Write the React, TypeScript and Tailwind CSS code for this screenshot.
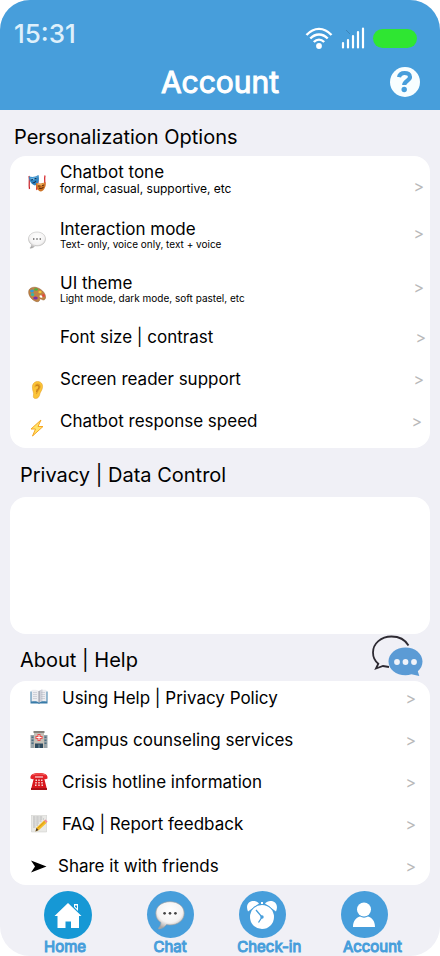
import type { ReactNode } from "react";

function SpeechBalloon({ size }: { size: number }) {
  return (
    <svg width={size} height={size} viewBox="0 0 36 36" aria-hidden="true">
      <defs>
        <radialGradient id="balloon" cx="50%" cy="32%" r="68%">
          <stop offset="0" stopColor="#ffffff" />
          <stop offset="0.65" stopColor="#f4f3f3" />
          <stop offset="1" stopColor="#a9a7a6" />
        </radialGradient>
      </defs>
      <path
        d="M18 2C8 2 1 8 1 16c0 5 2.400 8.600 6.200 11-.2 3-1.200 5-2.900 6.700-.5.700 0 1.200.8 1 4.200-.7 7-2.700 8.700-5.200 1.400.3 2.800.4 4.200.4 10 0 17-6 17-14S28 2 18 2z"
        fill="url(#balloon)"
        stroke="#a5a3a2"
        strokeWidth="0.8"
      />
      <circle cx="11.500" cy="16" r="1.600" fill="#444" />
      <circle cx="18" cy="16" r="1.600" fill="#444" />
      <circle cx="24.500" cy="16" r="1.600" fill="#444" />
    </svg>
  );
}

function Masks() {
  return (
    <svg width="18" height="18" viewBox="0 0 36 36" aria-hidden="true">
      <path d="M2 4c2 8-1 18 1 26M18 5c3 5 1 10 2 14" stroke="#c9242b" strokeWidth="2.500" fill="none" />
      <path d="M34 3c-2 8 1 14-1 22M17 20c2 4-1 8 1 12" stroke="#d6282c" strokeWidth="2.500" fill="none" />
      <path d="M2 5c7 2 13 1 19-3 2 9 1 18-7 21C7 21 2 14 2 5z" fill="#2f86c4" />
      <path d="M4 7c6 1 11 0 15-3 0 5-4 8-13 8z" fill="#6bb6e4" />
      <path d="M6 12l4-1M13 10l4-2M9 18c3 0 5-1 7-4" stroke="#123659" strokeWidth="2.200" fill="none" />
      <path d="M16 18c7 2 13 1 19-2 1 9-2 17-9 19-7-1-10-8-10-17z" fill="#cf7426" />
      <path d="M18 19c6 2 11 1 15-1 0 4-5 6-13 5z" fill="#f2ae56" />
      <path d="M20 24h5M28 23l4-1M22 28c4 2 7 1 9-2" stroke="#5e2a0d" strokeWidth="2.200" fill="none" />
    </svg>
  );
}

function Palette() {
  return (
    <svg width="18" height="18" viewBox="0 0 36 36" aria-hidden="true">
      <path
        d="M2 10C6 3 16 3 24 8c8 5 12 12 11 18-1 4-4 5-7 3-2-2-5-1-5 1 0 3-3 4-7 3C6 29-1 19 2 10z"
        fill="#c08345"
        stroke="#8d5a2b"
        strokeWidth="1"
      />
      <ellipse cx="26" cy="23" rx="3.200" ry="2.200" fill="#fff" transform="rotate(35 26 23)" />
      <ellipse cx="8" cy="12" rx="3.800" ry="3.200" fill="#2f9fd8" />
      <ellipse cx="16" cy="9" rx="3.800" ry="2.600" fill="#4fb043" />
      <ellipse cx="24" cy="14" rx="3.200" ry="2.500" fill="#f2cc35" />
      <ellipse cx="31" cy="21" rx="2.500" ry="3" fill="#e8473e" />
      <ellipse cx="9" cy="19" rx="3.500" ry="3" fill="#33b7a8" />
      <ellipse cx="15" cy="26" rx="4.500" ry="3.200" fill="#7a2ea8" />
    </svg>
  );
}

function Ear() {
  return (
    <svg width="18" height="18" viewBox="0 0 36 36" aria-hidden="true">
      <path
        d="M9 14C8 6 13 1 19 1c7 0 11 5 10 12-1 6-4 8-5 12-1 6-4 10-9 10-4 0-5-3-4-7 1-5-2-8-2-14z"
        fill="#fbc438"
        stroke="#e0991f"
        strokeWidth="1"
      />
      <path
        d="M13 13c0-5 3-8 6-8 5 0 7 4 6 8-1 4-4 6-5 9-1 3-3 5-4 4-1-2 2-4 0-7-1-2 1-3 3-4 2-2 1-5-1-5-3 0-3 3-5 3z"
        fill="#e39f2a"
      />
      <path d="M16 10c3-3 7-1 6 3s-4 5-5 9" stroke="#b76e12" strokeWidth="1.500" fill="none" />
    </svg>
  );
}

function Bolt() {
  return (
    <svg width="18" height="18" viewBox="0 0 36 36" aria-hidden="true">
      <path
        d="M26 2L6 20h9L9 34l21-19h-10z"
        fill="#ffe36a"
        stroke="#f6a623"
        strokeWidth="2"
        strokeLinejoin="round"
      />
    </svg>
  );
}

function Book() {
  return (
    <svg width="18" height="18" viewBox="0 0 36 36" aria-hidden="true">
      <path d="M1 5h34v24H20l-2 1-2-1H1z" fill="#397ba8" />
      <path d="M3 2c6-1 11-1 15 2 4-3 9-3 15-2v23c-6-1-11-1-15 2-4-3-9-3-15-2z" fill="#ededf1" />
      <path d="M18 4c2-2 5-3 7-3v23c-3 0-5 1-7 3z" fill="#cfd1da" />
      <path d="M18 4v23" stroke="#777985" strokeWidth="1.500" />
      <path d="M6 7h8M6 11h8M6 15h8M6 19h8M22 7h8M22 11h8M22 15h8M22 19h8" stroke="#b1b4c0" strokeWidth="1" />
    </svg>
  );
}

function Hospital() {
  return (
    <svg width="18" height="18" viewBox="0 0 36 36" aria-hidden="true">
      <path d="M1 8h34v26H1z" fill="#9aa4a9" />
      <path d="M3 11h4v3H3zM3 17h4v3H3zM3 23h4v3H3zM29 11h4v3h-4zM29 17h4v3h-4zM29 23h4v3h-4z" fill="#4d6e82" />
      <path d="M8 2h20v32H8z" fill="#c5c0b7" />
      <path d="M7 0h22v4H7z" fill="#85827c" />
      <path d="M15 6h6v4h4v6h-4v4h-6v-4h-4v-6h4z" fill="#ec4c4c" />
      <path d="M17 8h2v4h4v2h-4v4h-2v-4h-4v-2h4z" fill="#fff" />
      <path d="M10 25h16v9H10z" fill="#2e4a5e" />
      <path d="M17 27h2v7h-2z" fill="#7d97a6" />
    </svg>
  );
}

function Telephone() {
  return (
    <svg width="18" height="18" viewBox="0 0 36 36" aria-hidden="true">
      <path d="M8 9h20l5 20v4H3v-4z" fill="#d8171d" />
      <path d="M1 11C0 3 6 0 18 0s18 3 17 11c-3 2-7 2-9 0V7H10v4c-2 2-6 2-9 0z" fill="#e42329" />
      <path d="M5 4c7-3 19-3 26 0" stroke="#ff7b75" strokeWidth="1.500" fill="none" />
      <path
        d="M11 13h3v3h-3zM16.500 13h3v3h-3zM22 13h3v3h-3zM10.500 18h3v3h-3zM16.500 18h3v3h-3zM22.500 18h3v3h-3zM10 23h3v3h-3zM16.500 23h3v3h-3zM23 23h3v3h-3z"
        fill="#f7d9d6"
      />
      <path d="M2 30h32v4H2z" fill="#a80f15" />
    </svg>
  );
}

function Memo() {
  return (
    <svg width="18" height="18" viewBox="0 0 36 36" aria-hidden="true">
      <path d="M3 0h30v34H3z" fill="#e9e9e6" stroke="#c9c9c6" strokeWidth="1" />
      <path d="M6 4h20M6 8h22M6 12h17M6 16h13M6 20h10M6 24h6" stroke="#a3a3a6" strokeWidth="1.500" strokeDasharray="5 1.500" />
      <path d="M28 11l5 5-15 14-7 3 2-8z" fill="#f5bd27" />
      <path d="M30 13l-15 14" stroke="#c98a13" strokeWidth="1.500" />
      <path d="M28 11l3-2 4 4-2 3z" fill="#f28a96" />
      <path d="M13 26l4 4-6 3z" fill="#4b3a2d" />
    </svg>
  );
}

function ShareArrow() {
  return (
    <svg width="18" height="18" viewBox="0 0 36 36" aria-hidden="true">
      <path d="M2 7l31 12L2 31l8-12z" fill="#000" />
    </svg>
  );
}

function Wifi() {
  return (
    <svg width="28" height="22" viewBox="0 0 28 22" aria-hidden="true">
      <g fill="none" stroke="#fff" strokeWidth="2.400">
        <path d="M1.500 8C9-.2 19-.2 26.500 8" />
        <path d="M5.300 11.500c5.200-5.400 12.200-5.400 17.400 0" />
        <path d="M8.800 15c3.200-3.200 7.200-3.200 10.400 0" />
      </g>
      <circle cx="14" cy="19" r="2.900" fill="#fff" />
    </svg>
  );
}

function Signal() {
  return (
    <svg width="24" height="22" viewBox="0 0 24 22" aria-hidden="true">
      <path
        d="M2 16v4.500M7 13v7.500M12 9v11.500M17 5v15.500M22 1.500v19"
        stroke="#fff"
        strokeWidth="2.200"
        strokeLinecap="round"
      />
      <path d="M5 3l4 4" stroke="#3a7fae" strokeWidth="0.8" />
    </svg>
  );
}

function HelpIcon() {
  return (
    <svg width="30" height="30" viewBox="0 0 30 30" aria-hidden="true">
      <circle cx="15" cy="15" r="15" fill="#f8feff" />
      <path
        d="M9 10.200C9.600 7.200 11.800 6 14.600 6c3.200 0 5.400 1.500 5.400 4 0 3.700-5.800 3.700-5.800 8"
        fill="none"
        stroke="#479edb"
        strokeWidth="4.200"
      />
      <circle cx="14.200" cy="22.500" r="2.700" fill="#479edb" />
    </svg>
  );
}

function ChatPair() {
  return (
    <svg width="52" height="42" viewBox="0 0 52 42" aria-hidden="true">
      <path
        d="M37.500 10.500C34 4.500 28 1.500 20.500 1.500 10 1.500 2 8.500 2 17.500c0 4.500 1.800 8.500 5.300 11.200L5 33.500l7-2.500 6 1"
        fill="none"
        stroke="#2d2a32"
        strokeWidth="1.800"
      />
      <path
        d="M34.500 12.500c9.500 0 17 6.200 17 14 0 4-1.700 7.300-4.700 9.700l1.500 4.800-7.800-1.700c-2 .7-4 1-6 1-9.500 0-17-6-17-13.800s7.500-14 17-14z"
        fill="#5b9bd5"
      />
      <g fill="#f0f3fa">
        <circle cx="26" cy="27" r="2.900" />
        <circle cx="34.500" cy="27" r="2.900" />
        <circle cx="43" cy="27" r="2.900" />
      </g>
    </svg>
  );
}

function HomeIcon() {
  return (
    <svg width="48" height="48" viewBox="0 0 48 48" aria-hidden="true">
      <circle cx="24" cy="24" r="24" fill="#1698d5" />
      <path d="M24 12l13.500 13H35v12h-8v-6.500h-5.500V37h-8V25h-3z" fill="#fff" />
      <path d="M30 13h4v7l-4-4z" fill="#fff" />
      <path d="M31 14.500h2v3l-2-2z" fill="#1698d5" />
    </svg>
  );
}

function ClockIcon() {
  return (
    <svg width="47" height="47" viewBox="0 0 47 47" aria-hidden="true">
      <circle cx="23.500" cy="23.500" r="23.500" fill="#479edb" />
      <path d="M9 20.500C6.500 15 9 10 14.500 10c2.400 0 4.200 1 5.500 2.500zM37 20.500c2.500-5.500 0-10.500-5.500-10.500-2.400 0-4.200 1-5.500 2.500z" fill="#fff" />
      <circle cx="23" cy="26" r="12.900" fill="#479edb" />
      <circle cx="23" cy="26" r="12" fill="#fff" />
      <path d="M22 11h2v2h-2z" fill="#fff" />
      <path d="M17 19l6 7-3.500 5.500" fill="none" stroke="#479edb" strokeWidth="1.300" />
      <circle cx="23" cy="26" r="1.700" fill="#479edb" />
    </svg>
  );
}

function PersonIcon() {
  return (
    <svg width="47" height="47" viewBox="0 0 47 47" aria-hidden="true">
      <circle cx="23.500" cy="23.500" r="23.500" fill="#479edb" />
      <circle cx="23" cy="18.500" r="7" fill="#fff" />
      <path d="M12 36c0-6 3-9.500 7-10.500 2.500 1.500 5.500 1.500 8 0 4 1 7 4.500 7 10.500z" fill="#fff" />
    </svg>
  );
}

type Row = {
  icon: ReactNode;
  title: string;
  note?: string;
  noteClass?: string;
  rowClass: string;
  iconClass: string;
  arrowClass: string;
};

const personalization: Row[] = [
  {
    icon: <Masks />,
    title: "Chatbot tone",
    note: "formal, casual, supportive, etc",
    noteClass: "text-[12px] leading-[14px]",
    rowClass: "h-[57px] pr-1.5",
    iconClass: "pt-3",
    arrowClass: "pt-3.5",
  },
  {
    icon: <SpeechBalloon size={18} />,
    title: "Interaction mode",
    note: "Text- only, voice only, text + voice",
    noteClass: "text-[10px] leading-[10px]",
    rowClass: "h-[54px] pr-1.5",
    iconClass: "pt-3",
    arrowClass: "pt-1",
  },
  {
    icon: <Palette />,
    title: "UI theme",
    note: "Light mode, dark mode, soft pastel, etc",
    noteClass: "text-[10px] leading-[10px]",
    rowClass: "h-[54px] pr-1.5",
    iconClass: "pt-3",
    arrowClass: "pt-1",
  },
  { icon: null, title: "Font size | contrast", rowClass: "h-[42px] pr-1", iconClass: "pt-3", arrowClass: "" },
  { icon: <Ear />, title: "Screen reader support", rowClass: "h-[42px] pr-1.5", iconClass: "pt-3", arrowClass: "" },
  { icon: <Bolt />, title: "Chatbot response speed", rowClass: "h-[37px] pr-2", iconClass: "pt-2", arrowClass: "" },
];

const help = [
  { icon: <Book />, title: "Using Help | Privacy Policy", gap: "gap-[14px]" },
  { icon: <Hospital />, title: "Campus counseling services", gap: "gap-[14px]" },
  { icon: <Telephone />, title: "Crisis hotline information", gap: "gap-[14px]" },
  { icon: <Memo />, title: "FAQ | Report feedback", gap: "gap-[14px]" },
  { icon: <ShareArrow />, title: "Share it with friends", gap: "gap-[10px]" },
];

const tabs = [
  { icon: <HomeIcon />, label: "Home", align: "items-start", iconClass: "", labelClass: "" },
  {
    icon: (
      <span className="flex size-[47px] items-center justify-center rounded-full bg-[#479edb]">
        <SpeechBalloon size={30} />
      </span>
    ),
    label: "Chat",
    align: "items-center",
    iconClass: "",
    labelClass: "",
  },
  { icon: <ClockIcon />, label: "Check-in", align: "items-start", iconClass: "pl-0.5", labelClass: "" },
  { icon: <PersonIcon />, label: "Account", align: "items-start", iconClass: "", labelClass: "pl-0.5" },
];

export default function App() {
  return (
    <div className="flex min-h-screen flex-col overflow-hidden rounded-[30px] bg-[#f0f0f6] font-['Inter',sans-serif] text-black">
      <header className="h-[110px] bg-[#479edb] text-white">
        <div className="flex h-[60px] items-center justify-between pt-4 pr-[23px] pl-[14px]">
          <time className="pb-2 text-[26px] leading-7 font-medium text-[#def0fb]">15:31</time>
          <div className="flex items-center gap-2">
            <Wifi />
            <Signal />
            <span className="h-[19px] w-11 rounded-full bg-[#2fe632]" />
          </div>
        </div>
        <div className="grid grid-cols-[30px_1fr_30px] items-center px-5 pt-1">
          <h1 className="col-start-2 text-center text-[30px] leading-9 font-normal [-webkit-text-stroke:1px]">Account</h1>
          <button type="button" aria-label="Help" className="size-[30px]">
            <HelpIcon />
          </button>
        </div>
      </header>

      <main>
        <section>
          <h2 className="flex h-[46px] items-center px-[14px] pt-2 text-[20px] leading-6">Personalization Options</h2>
          <ul className="mx-[10px] rounded-[16px] bg-white pt-1.5">
            {personalization.map((row) => (
              <li key={row.title}>
                <button type="button" className={`flex w-full items-start pl-[18px] text-left ${row.rowClass}`}>
                  <span className={`w-8 shrink-0 ${row.iconClass}`}>{row.icon}</span>
                  <span className="flex flex-1 flex-col">
                    <span className="text-[17px] leading-5">{row.title}</span>
                    {row.note && <span className={row.noteClass}>{row.note}</span>}
                  </span>
                  <span className={`text-[16px] leading-5 text-[#b9b9b9] ${row.arrowClass}`}>&gt;</span>
                </button>
              </li>
            ))}
          </ul>
        </section>

        <section>
          <h2 className="flex h-[49px] items-center px-5 pt-1 text-[20px] leading-6">Privacy | Data Control</h2>
          <div className="mx-[10px] h-[137px] rounded-[16px] bg-white" />
        </section>

        <section>
          <div className="flex h-[47px] items-center justify-between pr-[17px] pl-5">
            <h2 className="pt-1 text-[20px] leading-6">About | Help</h2>
            <button type="button" aria-label="Open chat" className="pb-1">
              <ChatPair />
            </button>
          </div>
          <ul className="mx-[10px] flex flex-col gap-2 rounded-[16px] bg-white pb-0.5">
            {help.map((row) => (
              <li key={row.title}>
                <button type="button" className={`flex h-[34px] w-full items-center pr-[14px] pl-5 text-left ${row.gap}`}>
                  {row.icon}
                  <span className="flex-1 text-[17px] leading-5">{row.title}</span>
                  <span className="text-[16px] leading-5 text-[#b9b9b9]">&gt;</span>
                </button>
              </li>
            ))}
          </ul>
        </section>
      </main>

      <nav className="grid grid-cols-[103fr_91fr_104fr_60fr] pt-1.5 pr-[38px] pl-11">
        {tabs.map((tab) => (
          <a
            key={tab.label}
            href={`#${tab.label.toLowerCase()}`}
            className={`flex w-fit flex-col text-[#479edb] ${tab.align}`}
          >
            <span className={`h-12 ${tab.iconClass}`}>{tab.icon}</span>
            <span className={`text-[15px] leading-4 [-webkit-text-stroke:1px] ${tab.labelClass}`}>{tab.label}</span>
          </a>
        ))}
      </nav>
    </div>
  );
}
